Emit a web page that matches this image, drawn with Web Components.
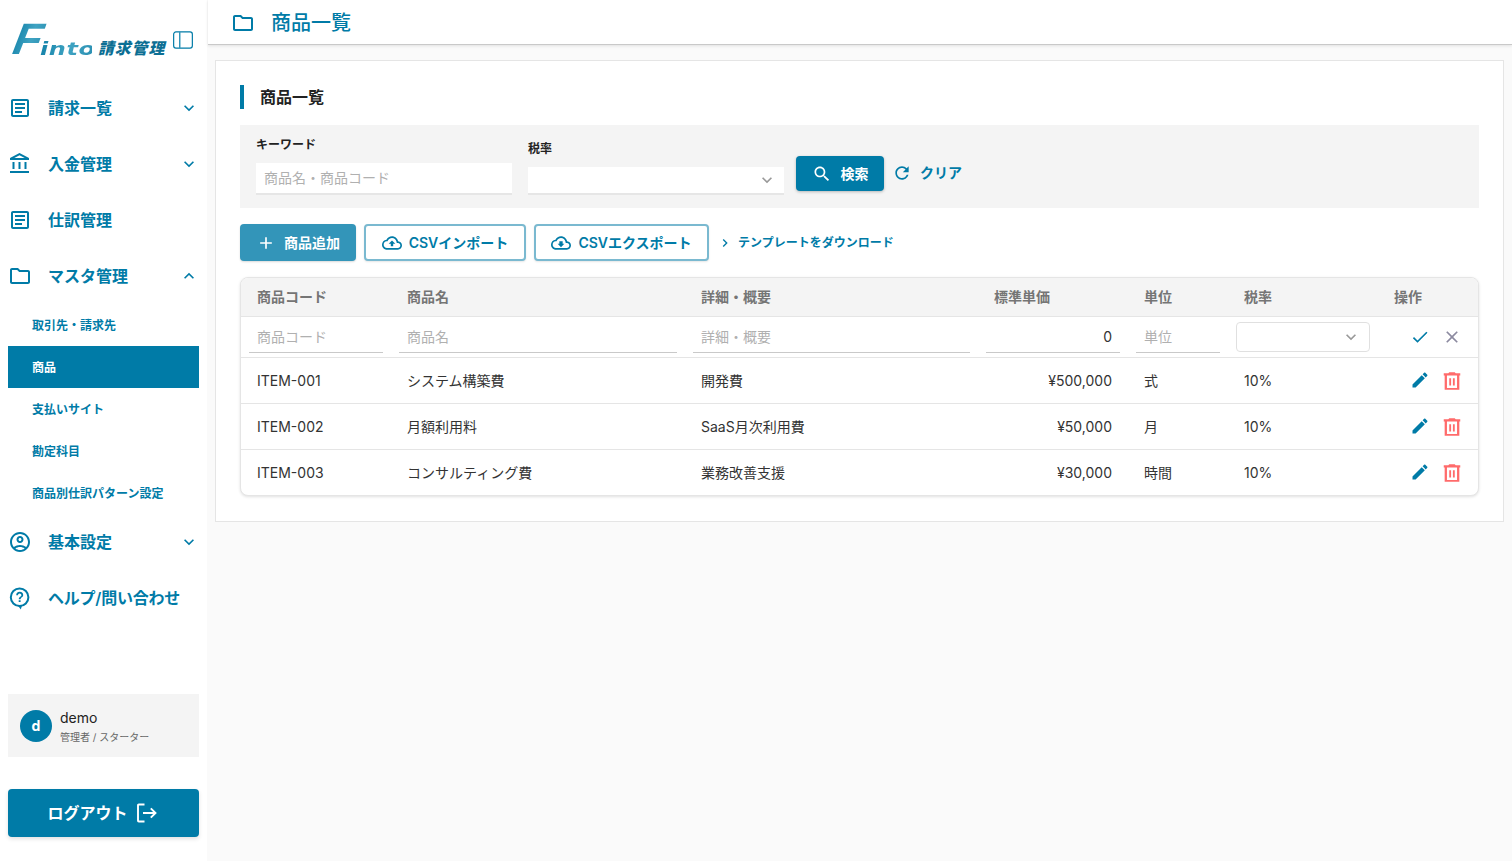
<!DOCTYPE html>
<html lang="ja"><head><meta charset="utf-8"><title>商品一覧</title>
<style>
html,body{margin:0;height:100%;overflow:hidden;background:#fafafa}
body{font-family:Inter,"Noto Sans CJK JP",sans-serif;line-height:20px;color:#333;--p:#007ba7}
</style></head><body>
<fin-app>
  <fin-sidebar slot="side">
    <fin-logo></fin-logo>
    <nav-item icon="article" label="請求一覧" chevron="down"></nav-item>
    <nav-item icon="bank" label="入金管理" chevron="down"></nav-item>
    <nav-item icon="article" label="仕訳管理"></nav-item>
    <nav-item icon="folder" label="マスタ管理" chevron="up"></nav-item>
    <nav-sub label="取引先・請求先"></nav-sub>
    <nav-sub label="商品" active></nav-sub>
    <nav-sub label="支払いサイト"></nav-sub>
    <nav-sub label="勘定科目"></nav-sub>
    <nav-sub label="商品別仕訳パターン設定"></nav-sub>
    <nav-item icon="account" label="基本設定" chevron="down"></nav-item>
    <nav-item icon="help" label="ヘルプ/問い合わせ" ls="-.22"></nav-item>
    <user-card slot="foot"></user-card>
    <logout-button slot="foot"></logout-button>
  </fin-sidebar>
  <page-header label="商品一覧"></page-header>
  <page-card label="商品一覧">
    <search-panel></search-panel>
    <action-bar></action-bar>
    <item-table></item-table>
  </page-card>
</fin-app>
<script>
const P={
article:'<path d="M19 5v14H5V5h14m0-2H5c-1.1 0-2 .9-2 2v14c0 1.1.9 2 2 2h14c1.1 0 2-.9 2-2V5c0-1.1-.9-2-2-2zM14 17H7v-2h7v2zm3-4H7v-2h10v2zm0-4H7V7h10v2z"/>',
bank:'<path d="M6.5 10h-2v7h2v-7zm6 0h-2v7h2v-7zm8.5 9H2v2h19v-2zm-2.5-9h-2v7h2v-7zm-7-6.74L16.71 6H6.29l5.21-2.74m0-2.26L2 6v2h19V6l-9.5-5z"/>',
folder:'<path d="M9.17 6l2 2H20v10H4V6h5.17M10 4H4c-1.1 0-1.99.9-1.99 2L2 18c0 1.1.9 2 2 2h16c1.1 0 2-.9 2-2V8c0-1.1-.9-2-2-2h-8l-2-2z"/>',
account:'<path d="M12 2C6.48 2 2 6.48 2 12s4.48 10 10 10 10-4.48 10-10S17.52 2 12 2zM7.35 18.5C8.66 17.56 10.26 17 12 17s3.34.56 4.65 1.5c-1.31.94-2.91 1.5-4.65 1.5s-3.34-.56-4.65-1.5zm10.79-1.38C16.45 15.8 14.32 15 12 15s-4.45.8-6.14 2.12C4.7 15.73 4 13.95 4 12c0-4.42 3.58-8 8-8s8 3.58 8 8c0 1.95-.7 3.73-1.86 5.12zM12 6c-1.93 0-3.5 1.57-3.5 3.5S10.07 13 12 13s3.5-1.57 3.5-3.5S13.93 6 12 6zm0 5c-.83 0-1.5-.67-1.5-1.5S11.17 8 12 8s1.5.67 1.5 1.5S12.83 11 12 11z"/>',
help:'<circle cx="11.6" cy="11.3" r="8.800" fill="none" stroke="currentColor" stroke-width="2"/><path d="M9.800 19.500l3 4 1.200-4z"/><path d="M10.700 14.200h1.900v1.900h-1.900zM11.700 5.800a3.500 3.500 0 0 0-3.500 3.500h1.800c0-.9.800-1.700 1.700-1.700s1.700.8 1.700 1.700c0 1.500-2.600 1.500-2.600 3.900h1.800c0-1.700 2.600-2 2.600-3.900a3.500 3.500 0 0 0-3.500-3.500z"/>',
down:'<path d="M7.41 8.59L12 13.17l4.59-4.58L18 10l-6 6-6-6z"/>',
up:'<path d="M7.41 15.41L12 10.83l4.59 4.58L18 14l-6-6-6 6z"/>',
right:'<path d="M10 6L8.59 7.41 13.17 12l-4.58 4.59L10 18l6-6z"/>',
search:'<path d="M15.5 14h-.79l-.28-.27C15.41 12.59 16 11.11 16 9.5 16 5.91 13.09 3 9.5 3S3 5.91 3 9.5 5.91 16 9.5 16c1.61 0 3.09-.59 4.23-1.57l.27.28v.79l5 4.99L20.49 19l-4.99-5zm-6 0C7.01 14 5 11.99 5 9.5S7.01 5 9.5 5 14 7.01 14 9.5 11.99 14 9.5 14z"/>',
refresh:'<path d="M17.65 6.35C16.2 4.9 14.21 4 12 4c-4.42 0-7.99 3.58-7.99 8s3.57 8 7.99 8c3.73 0 6.84-2.55 7.73-6h-2.08c-.82 2.33-3.04 4-5.65 4-3.31 0-6-2.69-6-6s2.69-6 6-6c1.66 0 3.14.69 4.22 1.78L13 11h7V4l-2.35 2.35z"/>',
plus:'<path d="M19 13h-6v6h-2v-6H5v-2h6V5h2v6h6v2z"/>',
upload:'<path d="M19.35 10.04C18.67 6.59 15.64 4 12 4 9.11 4 6.6 5.64 5.35 8.04 2.34 8.36 0 10.91 0 14c0 3.31 2.69 6 6 6h13c2.76 0 5-2.24 5-5 0-2.64-2.05-4.78-4.65-4.96zM19 18H6c-2.21 0-4-1.79-4-4 0-2.05 1.53-3.76 3.56-3.97l1.07-.11.5-.95C8.08 7.14 9.94 6 12 6c2.62 0 4.88 1.86 5.39 4.43l.3 1.5 1.53.11c1.56.1 2.78 1.41 2.78 2.96 0 1.65-1.35 3-3 3zM8 13h2.55v3h2.9v-3H16l-4-4z"/>',
download:'<path d="M19.35 10.04C18.67 6.59 15.64 4 12 4 9.11 4 6.6 5.64 5.35 8.04 2.34 8.36 0 10.91 0 14c0 3.31 2.69 6 6 6h13c2.76 0 5-2.24 5-5 0-2.64-2.05-4.78-4.65-4.96zM19 18H6c-2.21 0-4-1.79-4-4 0-2.05 1.53-3.76 3.56-3.97l1.07-.11.5-.95C8.08 7.14 9.94 6 12 6c2.62 0 4.88 1.86 5.39 4.43l.3 1.5 1.53.11c1.56.1 2.78 1.41 2.78 2.96 0 1.65-1.35 3-3 3zM14 13v-3h-4v3H8l4 4 4-4h-2z"/>',
check:'<path d="M9 16.17L4.83 12l-1.42 1.41L9 19 21 7l-1.41-1.41z"/>',
close:'<path d="M19 6.41L17.59 5 12 10.59 6.41 5 5 6.41 10.59 12 5 17.59 6.41 19 12 13.41 17.59 19 19 17.59 13.41 12z"/>',
edit:'<path d="M3 17.25V21h3.75L17.81 9.94l-3.75-3.75L3 17.25zM20.71 7.04c.39-.39.39-1.02 0-1.41l-2.34-2.34c-.39-.39-1.02-.39-1.41 0l-1.83 1.83 3.75 3.75 1.83-1.83z"/>',
trash:'<path fill-rule="evenodd" d="M9 2.500h6l1 1h5v2.500h-1v15.500H4V6H3V3.500h5zM6.500 6v13.500h11V6zM9 9h2v8H9zM13 9h2v8h-2z"/>',
logout:'<path d="M10.500 3.500H4.800a.8.8 0 0 0-.8.8v15.400a.8.8 0 0 0 .8.8h5.700M9 12h12.500M16.800 7.300l4.700 4.700-4.700 4.700" fill="none" stroke="currentColor" stroke-width="1.900"/>',
panel:'<rect x="1.800" y="3.200" width="20.400" height="17.600" rx="2.500" fill="none" stroke="currentColor" stroke-width="1.300"/><path d="M8.500 3.500v17" fill="none" stroke="currentColor" stroke-width="1.300"/>'
};
class Base extends HTMLElement{
  constructor(){super();this.attachShadow({mode:'open'})}
  connectedCallback(){this.shadowRoot.innerHTML=this.render()}
  a(n){return this.getAttribute(n)||''}
}
const def=(n,f)=>customElements.define(n,class extends Base{render(){return f.call(this)}});
def('fin-icon',function(){const s=this.a('size')||24;return `<style>:host{display:inline-flex;flex:none;width:${s}px;height:${s}px;color:${this.a('color')||'inherit'}}svg{width:100%;height:100%;fill:currentColor;display:block}</style><svg viewBox="0 0 24 24" aria-hidden="true">${P[this.a('name')]}</svg>`});
def('fin-app',function(){return `<style>:host{display:flex;width:1512px;height:861px;overflow:hidden}
.main{flex:1;min-width:0;display:flex;flex-direction:column;gap:15px;margin-left:1px}::slotted(fin-sidebar){flex:none}</style>
<slot name="side"></slot><div class="main"><slot></slot></div>`});
def('fin-sidebar',function(){return `<style>:host{display:flex;flex-direction:column;width:207px;height:861px;box-sizing:border-box;padding:0 8px 24px;background:#fff;color:var(--p)}
.foot{margin-top:auto;display:flex;flex-direction:column;gap:32px}</style>
<slot></slot><div class="foot"><slot name="foot"></slot></div>`});
def('fin-logo',function(){return `<style>:host{display:block;height:80px;position:relative}
.mark{display:flex;align-items:baseline;position:absolute;left:4px;top:17px;white-space:nowrap;line-height:44px}
.g{background:linear-gradient(100deg,#0f7ea6 0%,#3fa3c2 55%,#2a8fb2 100%);-webkit-background-clip:text;background-clip:text;color:transparent}
.f{font:italic 700 44px/44px "Liberation Sans",sans-serif;transform:skewX(-10deg) scaleX(1.08);transform-origin:left 33px;width:28px}
.into{font:italic 700 24px/44px "DejaVu Sans",sans-serif;transform:scaleY(.72);transform-origin:left 33px;letter-spacing:.6px;width:52px;margin-right:6px}
.ja{font:italic 900 15.800px/44px "Noto Sans CJK JP",sans-serif;color:#0c6f94;letter-spacing:1px}
.t{position:absolute;left:164px;top:29px;color:var(--p)}</style>
<div class="mark"><span class="f g">F</span><span class="into g">into</span><span class="ja">請求管理</span></div>
<fin-icon class="t" name="panel" size="22"></fin-icon>`});
def('nav-item',function(){const c=this.a('chevron');return `<style>:host{display:flex;align-items:center;height:56px;gap:16px;color:var(--p)}
.l{flex:1;font-size:16px;font-weight:600;white-space:nowrap;letter-spacing:${this.a('ls')||0}px}</style>
<fin-icon name="${this.a('icon')}"></fin-icon><span class="l">${this.a('label')}</span>${c?`<fin-icon name="${c}" size="20"></fin-icon>`:''}`});
def('nav-sub',function(){const on=this.hasAttribute('active');return `<style>:host{display:flex;align-items:center;height:42px;box-sizing:border-box;padding:2px 0 0 24px;font-size:12px;font-weight:600;white-space:nowrap;color:${on?'#fff':'var(--p)'};background:${on?'var(--p)':'transparent'}}</style>${this.a('label')}`});
def('user-card',function(){return `<style>:host{display:flex;align-items:center;gap:8px;height:63px;box-sizing:border-box;padding:0 12px;background:#f4f4f4}
.av{width:32px;height:32px;border-radius:50%;background:var(--p);color:#fff;font-weight:700;font-size:14px;display:flex;align-items:center;justify-content:center}
.w{padding-top:1px}.n{font-size:14px;color:#222;line-height:20px}.r{font-size:10px;color:#666;line-height:16px;margin-top:1px}</style>
<div class="av">d</div><div class="w"><div class="n">demo</div><div class="r">管理者 / スターター</div></div>`});
def('logout-button',function(){return `<style>:host{display:flex;align-items:center;justify-content:center;gap:8px;height:48px;border-radius:4px;background:var(--p);color:#fff;font-size:16px;font-weight:600;box-shadow:0 2px 4px rgba(0,0,0,.12)}fin-icon{margin:0 2px 0 -2px}</style>ログアウト<fin-icon name="logout"></fin-icon>`});
def('page-header',function(){return `<style>:host{display:flex;align-items:center;gap:16px;height:45px;flex:none;box-sizing:border-box;padding:1px 0 0 23px;background:#fff;border-bottom:1px solid #c9c9c9;box-shadow:0 1px 3px rgba(0,0,0,.1);color:var(--p);font-size:20px;font-weight:500}</style><fin-icon name="folder"></fin-icon>${this.a('label')}`});
def('page-card',function(){return `<style>:host{display:block;flex:none;margin:0 8px 0 7px;box-sizing:border-box;height:462px;background:#fff;border:1px solid #e5e5e5;padding:24px}
h2{margin:0 0 16px;border-left:4px solid var(--p);padding-left:16px;font-size:16px;line-height:24px;font-weight:700;color:#222}
.s{display:flex;flex-direction:column;gap:16px}</style><h2>${this.a('label')}</h2><div class="s"><slot></slot></div>`});
def('text-field',function(){return `<style>:host{display:block;width:256px}label{display:block;font-size:12px;font-weight:700;color:#222;line-height:16px;margin-bottom:10px}
.b{height:${this.a('h')||32}px;box-sizing:border-box;background:#fff;border-bottom:2px solid #e6e6e6;display:flex;align-items:center;padding:0 8px;font-size:14px;color:#b0b0b0}fin-icon{color:#999;margin-left:auto;margin-right:-1px}</style>
<label>${this.a('label')}</label><div class="b">${this.a('ph')}${this.hasAttribute('select')?'<fin-icon name="down" size="20"></fin-icon>':''}</div>`});
def('search-panel',function(){return `<style>:host{display:flex;align-items:flex-end;gap:16px;height:83px;box-sizing:border-box;padding:0 16px 13px;background:#f4f4f4}
.btn{display:flex;align-items:center;justify-content:center;gap:9px;width:88px;height:35px;margin:0 -4px 4px -4px;border-radius:4px;background:var(--p);color:#fff;font-size:14px;font-weight:600;box-shadow:0 1px 3px rgba(0,0,0,.25)}
.clr{display:flex;align-items:center;gap:8px;height:35px;margin:0 0 5px -4px;color:var(--p);font-size:14px;font-weight:600}</style>
<text-field label="キーワード" ph="商品名・商品コード"></text-field>
<text-field label="税率" select h="28"></text-field>
<div class="btn"><fin-icon name="search" size="20"></fin-icon>検索</div>
<div class="clr"><fin-icon name="refresh" size="20"></fin-icon>クリア</div>`});
def('fin-button',function(){const f=this.hasAttribute('filled');return `<style>:host{display:flex;align-items:center;justify-content:center;gap:${this.a('gap')||7}px;box-sizing:border-box;height:37px;width:${this.a('w')}px;border-radius:4px;font-size:14px;font-weight:600;white-space:nowrap;
${f?'background:#3395b9;color:#fff;box-shadow:0 1px 2px rgba(0,0,0,.15)':'background:#fff;color:var(--p);border:2px solid #7ab9d0;box-shadow:0 1px 2px rgba(0,0,0,.1)'}}</style><fin-icon name="${this.a('icon')}" size="20"></fin-icon><slot></slot>`});
def('action-bar',function(){return `<style>:host{display:flex;align-items:center;gap:8px;height:37px}
.d{display:flex;align-items:center;gap:5px;color:var(--p);font-size:12px;font-weight:600;white-space:nowrap}</style>
<fin-button filled w="116" icon="plus" gap="8">商品追加</fin-button>
<fin-button w="162" icon="upload">CSVインポート</fin-button>
<fin-button w="175" icon="download">CSVエクスポート</fin-button>
<div class="d"><fin-icon name="right" size="16"></fin-icon>テンプレートをダウンロード</div>`});
def('item-row',function(){const c=JSON.parse(this.a('cells'));return `<style>:host{display:grid;grid-template-columns:var(--cols);align-items:center;height:46px;box-sizing:border-box;border-top:1px solid #e5e5e5;font-size:14px;color:#333}
div{padding:0 16px;white-space:nowrap}.n{text-align:right}.a{display:flex;gap:8px;padding:0 0 0 30px}.x{width:24px;display:flex;justify-content:center}</style>
<div>${c[0]}</div><div>${c[1]}</div><div>${c[2]}</div><div class="n">${c[3]}</div><div>${c[4]}</div><div>${c[5]}</div>
<div class="a"><span class="x"><fin-icon name="edit" size="20" color="#007ba7"></fin-icon></span><span class="x"><fin-icon name="trash" size="22" color="#ff6b6b"></fin-icon></span></div>`});
def('item-table',function(){
const rows=[["ITEM-001","システム構築費","開発費","¥500,000","式","10%"],["ITEM-002","月額利用料","SaaS月次利用費","¥50,000","月","10%"],["ITEM-003","コンサルティング費","業務改善支援","¥30,000","時間","10%"]];
const inp=(t,r)=>`<div class="c"><div class="u${r?' r v':''}">${t}</div></div>`;
return `<style>:host{display:block;--cols:150px 294px 293px 150px 100px 150px 100px;height:219px;box-sizing:border-box;border:1px solid #e5e5e5;border-radius:8px;background:#fff;overflow:hidden;box-shadow:0 1px 3px rgba(0,0,0,.12)}
.h,.f{display:grid;grid-template-columns:var(--cols);align-items:center}
.h{height:38px;background:#f4f4f4;font-size:14px;font-weight:600;color:#757575}.h div{padding:0 16px;white-space:nowrap}
.f{height:41px;box-sizing:border-box;border-top:1px solid #e5e5e5;font-size:14px;color:#b0b0b0}
.c{padding:0 8px}.u{height:30px;box-sizing:border-box;margin-top:1px;padding:0 8px;display:flex;align-items:center;border-bottom:1px solid #c9c9c9;white-space:nowrap}.r{justify-content:flex-end}.v{color:#333}
.sel{height:30px;box-sizing:border-box;margin-top:-1px;border:1px solid #e0e0e0;border-radius:4px;display:flex;align-items:center;justify-content:flex-end;padding-right:8px;color:#999}
.a{display:flex;gap:8px;padding-left:30px}.x{width:24px;display:flex;justify-content:center}</style>
<div class="h"><div>商品コード</div><div>商品名</div><div>詳細・概要</div><div>標準単価</div><div>単位</div><div>税率</div><div>操作</div></div>
<div class="f">${inp('商品コード')}${inp('商品名')}${inp('詳細・概要')}${inp('0',1)}${inp('単位')}<div class="c"><div class="sel"><fin-icon name="down" size="20"></fin-icon></div></div>
<div class="a"><span class="x"><fin-icon name="check" size="20" color="#007ba7"></fin-icon></span><span class="x"><fin-icon name="close" size="20" color="#8c8aa0"></fin-icon></span></div></div>
${rows.map(r=>`<item-row cells='${JSON.stringify(r)}'></item-row>`).join('')}`});
</script>
</body></html>
